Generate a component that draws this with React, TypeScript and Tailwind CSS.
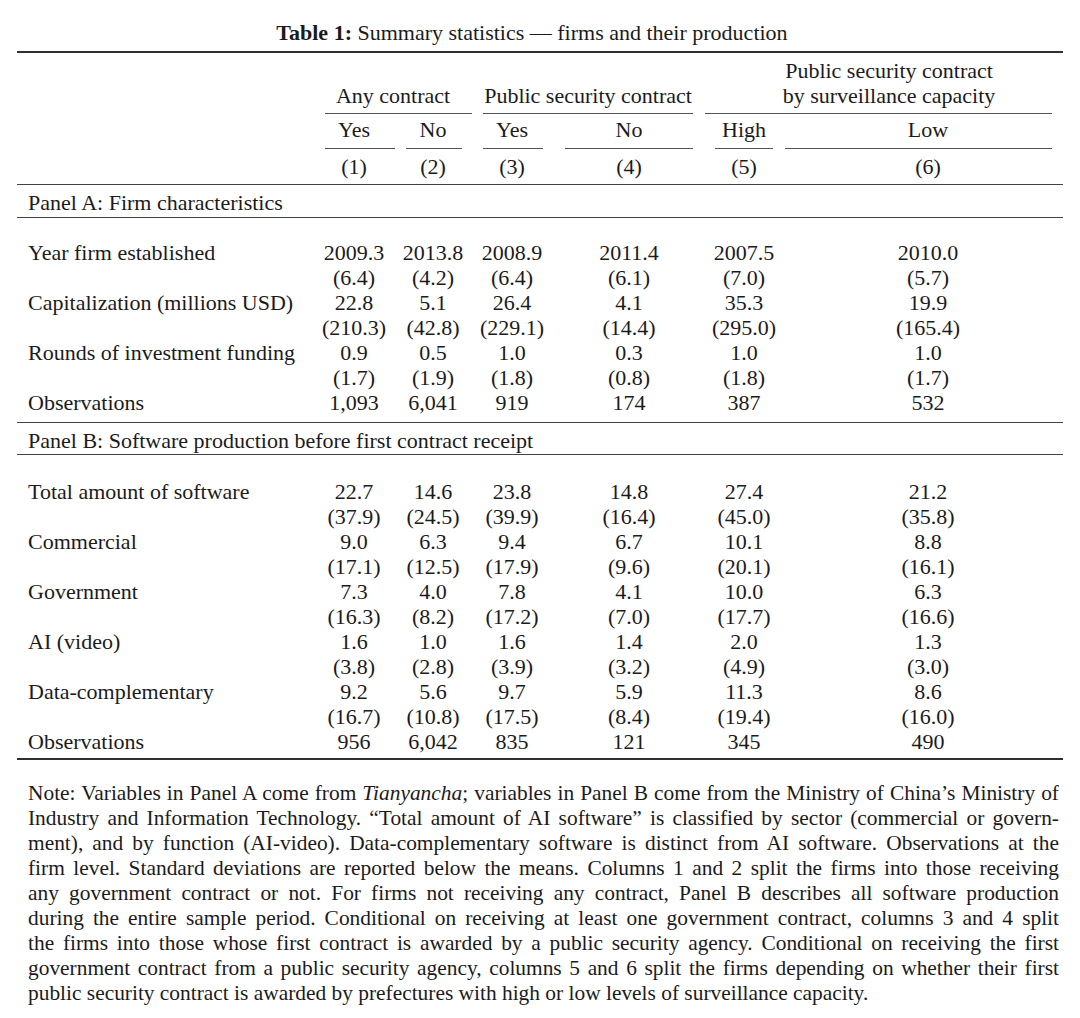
import React from "react";

const COLS = "grid grid-cols-[303px_80px_78px_76px_150px_75px_284px]";
const SHIFT = ["pr-[12px]", "pr-[12px]", "pr-[8px]", "", "pl-[5px]", "pl-[14px]"];

type RowData = [string, string[]];

const panelA: RowData[] = [
  ["Year firm established", ["2009.3", "2013.8", "2008.9", "2011.4", "2007.5", "2010.0"]],
  ["", ["(6.4)", "(4.2)", "(6.4)", "(6.1)", "(7.0)", "(5.7)"]],
  ["Capitalization (millions USD)", ["22.8", "5.1", "26.4", "4.1", "35.3", "19.9"]],
  ["", ["(210.3)", "(42.8)", "(229.1)", "(14.4)", "(295.0)", "(165.4)"]],
  ["Rounds of investment funding", ["0.9", "0.5", "1.0", "0.3", "1.0", "1.0"]],
  ["", ["(1.7)", "(1.9)", "(1.8)", "(0.8)", "(1.8)", "(1.7)"]],
  ["Observations", ["1,093", "6,041", "919", "174", "387", "532"]],
];

const panelB: RowData[] = [
  ["Total amount of software", ["22.7", "14.6", "23.8", "14.8", "27.4", "21.2"]],
  ["", ["(37.9)", "(24.5)", "(39.9)", "(16.4)", "(45.0)", "(35.8)"]],
  ["Commercial", ["9.0", "6.3", "9.4", "6.7", "10.1", "8.8"]],
  ["", ["(17.1)", "(12.5)", "(17.9)", "(9.6)", "(20.1)", "(16.1)"]],
  ["Government", ["7.3", "4.0", "7.8", "4.1", "10.0", "6.3"]],
  ["", ["(16.3)", "(8.2)", "(17.2)", "(7.0)", "(17.7)", "(16.6)"]],
  ["AI (video)", ["1.6", "1.0", "1.6", "1.4", "2.0", "1.3"]],
  ["", ["(3.8)", "(2.8)", "(3.9)", "(3.2)", "(4.9)", "(3.0)"]],
  ["Data-complementary", ["9.2", "5.6", "9.7", "5.9", "11.3", "8.6"]],
  ["", ["(16.7)", "(10.8)", "(17.5)", "(8.4)", "(19.4)", "(16.0)"]],
  ["Observations", ["956", "6,042", "835", "121", "345", "490"]],
];

function Row({ label, vals }: { label: string; vals: string[] }) {
  return (
    <div className={`${COLS} h-[25px] leading-[25px]`}>
      <div className="pl-[11px] whitespace-nowrap">{label}</div>
      {vals.map((v, i) => (
        <div key={i} className={`text-center whitespace-nowrap ${SHIFT[i]}`}>
          {v}
        </div>
      ))}
    </div>
  );
}

function Line({ children, last = false }: { children: React.ReactNode; last?: boolean }) {
  return (
    <div className={last ? "h-[25px] leading-[25px] text-left whitespace-nowrap" : "h-[25px] leading-[25px] overflow-hidden text-justify [text-align-last:justify]"}>
      {children}
    </div>
  );
}

export default function App() {
  return (
    <div className="w-[1080px] h-[1018px] bg-white text-[#1b1b1b] text-[22px] font-['Liberation_Serif','Times_New_Roman',serif] pt-[20px]">
      <div className="h-[25px] leading-[25px] text-center pr-[16px] whitespace-nowrap">
        <span className="font-bold">Table 1:</span> Summary statistics — firms and their production
      </div>

      <div className="mx-[17px] w-[1046px]">
        <div className="mt-[6px] h-[2px] bg-[#2f2f2f]" />

        {/* header rows */}
        <div className={`${COLS} mt-[5px] h-[25px] leading-[25px]`}>
          <div className="col-start-6 col-span-2 text-center pl-[11px] whitespace-nowrap">Public security contract</div>
        </div>
        <div className={`${COLS} h-[25px] leading-[25px]`}>
          <div className="col-start-2 col-span-2 text-center pr-[12px] whitespace-nowrap">Any contract</div>
          <div className="col-start-4 col-span-2 text-center pr-[6px] whitespace-nowrap">Public security contract</div>
          <div className="col-start-6 col-span-2 text-center pl-[11px] whitespace-nowrap">by surveillance capacity</div>
        </div>
        <div className={`${COLS} mt-[5px] h-[1px]`}>
          <div className="col-start-2 col-span-2 ml-[5px] mr-[6px] h-[1px] bg-[#555]" />
          <div className="col-start-4 col-span-2 ml-[5px] mr-[11px] h-[1px] bg-[#555]" />
          <div className="col-start-6 col-span-2 ml-[1px] mr-[11px] h-[1px] bg-[#555]" />
        </div>
        <div className={`${COLS} mt-[3px] h-[25px] leading-[25px]`}>
          <div />
          {["Yes", "No", "Yes", "No", "High", "Low"].map((v, i) => (
            <div key={i} className={`text-center ${SHIFT[i]}`}>
              {v}
            </div>
          ))}
        </div>
        <div className={`${COLS} mt-[6px] h-[1px]`}>
          <div />
          <div className="ml-[5px] mr-[5px] h-[1px] bg-[#555]" />
          <div className="ml-[6px] mr-[16px] h-[1px] bg-[#555]" />
          <div className="ml-[5px] mr-[11px] h-[1px] bg-[#555]" />
          <div className="ml-[11px] mr-[11px] h-[1px] bg-[#555]" />
          <div className="ml-[11px] mr-[6px] h-[1px] bg-[#555]" />
          <div className="ml-[6px] mr-[11px] h-[1px] bg-[#555]" />
        </div>
        <div className={`${COLS} mt-[5px] h-[25px] leading-[25px]`}>
          <div />
          {["(1)", "(2)", "(3)", "(4)", "(5)", "(6)"].map((v, i) => (
            <div key={i} className={`text-center ${SHIFT[i]}`}>
              {v}
            </div>
          ))}
        </div>
        <div className="mt-[5px] h-[1px] bg-[#444]" />

        {/* Panel A */}
        <div className="mt-[5px] h-[25px] leading-[25px] pl-[11px] whitespace-nowrap">Panel A: Firm characteristics</div>
        <div className="mt-[2px] h-[1px] bg-[#444]" />
        <div className="mt-[22px]">
          {panelA.map(([l, v], i) => (
            <Row key={i} label={l} vals={v} />
          ))}
        </div>
        <div className="mt-[7px] h-[1px] bg-[#444]" />

        {/* Panel B */}
        <div className="mt-[5px] h-[25px] leading-[25px] pl-[11px] whitespace-nowrap">Panel B: Software production before first contract receipt</div>
        <div className="mt-[1px] h-[1px] bg-[#444]" />
        <div className="mt-[24px]">
          {panelB.map(([l, v], i) => (
            <Row key={i} label={l} vals={v} />
          ))}
        </div>
        <div className="mt-[4px] h-[2px] bg-[#2f2f2f]" />
      </div>

      {/* Note */}
      <div className="mt-[21px] ml-[28px] w-[1031px] text-[21.4px]">
        <Line>
          Note: Variables in Panel A come from <i>Tianyancha</i>; variables in Panel B come from the Ministry of China’s Ministry of
        </Line>
        <Line>
          Industry and Information Technology. “Total amount of AI software” is classified by sector (commercial or govern-
        </Line>
        <Line>
          ment), and by function (AI-video). Data-complementary software is distinct from AI software. Observations at the
        </Line>
        <Line>
          firm level. Standard deviations are reported below the means. Columns 1 and 2 split the firms into those receiving
        </Line>
        <Line>
          any government contract or not. For firms not receiving any contract, Panel B describes all software production
        </Line>
        <Line>
          during the entire sample period. Conditional on receiving at least one government contract, columns 3 and 4 split
        </Line>
        <Line>
          the firms into those whose first contract is awarded by a public security agency. Conditional on receiving the first
        </Line>
        <Line>
          government contract from a public security agency, columns 5 and 6 split the firms depending on whether their first
        </Line>
        <Line last>
          public security contract is awarded by prefectures with high or low levels of surveillance capacity.
        </Line>
      </div>
    </div>
  );
}
